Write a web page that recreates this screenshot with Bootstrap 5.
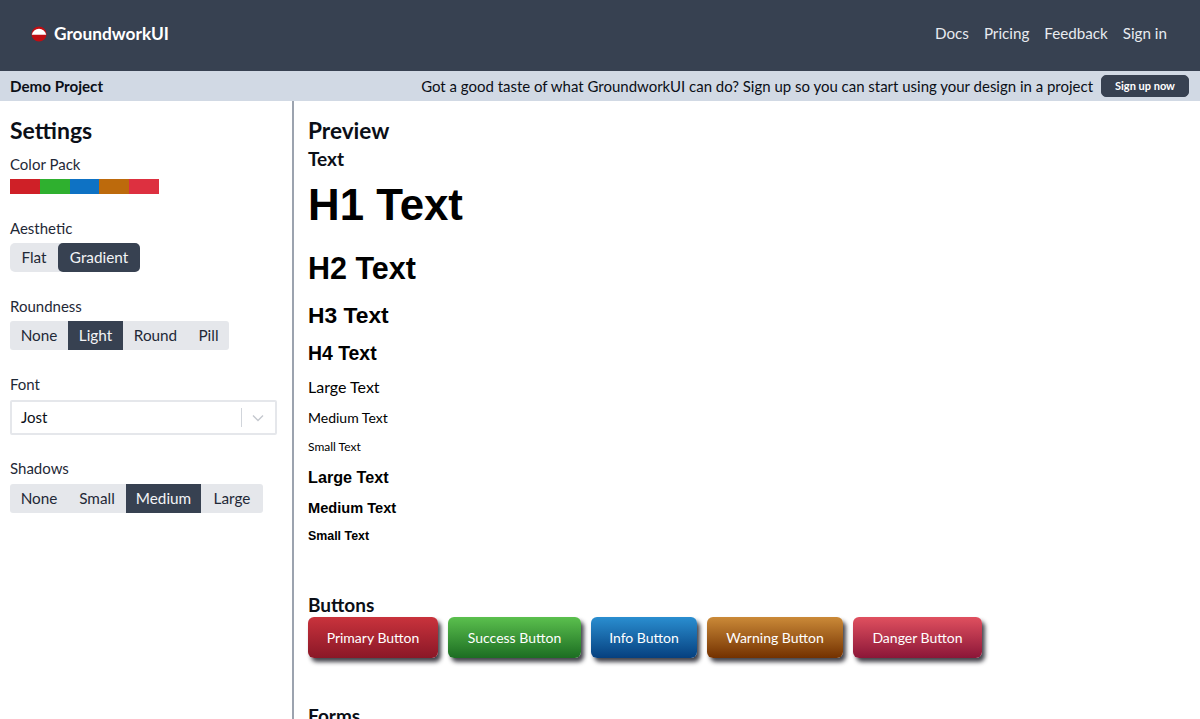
<!DOCTYPE html>
<html lang="en">
<head>
    <meta charset="UTF-8">
    <meta name="viewport" content="width=device-width, initial-scale=1.0">
    <title>GroundworkUI</title>
    <link href="https://cdn.jsdelivr.net/npm/bootstrap@5.3.0/dist/css/bootstrap.min.css" rel="stylesheet">
    <style>
        html, body { height: 100%; overflow: hidden; }
        body { font-family: "Lato", "Liberation Sans", sans-serif; color: #0b0f17; background: #fff; }

        .top-bar { height: 71px; background: #374151; padding: 0 33px 4px 31px; }
        .brand-link { font-size: 17.3px; font-weight: 700; color: #fff; text-decoration: none; gap: 7px; }
        .top-link { font-size: 15.2px; color: #e8ebf0; text-decoration: none; }
        .top-links { gap: 15px; }

        .demo-bar { height: 30px; background: #d1d9e4; padding: 0 11px 0 10px; }
        .demo-name { font-size: 15.2px; font-weight: 700; }
        .demo-cta { gap: 8px; font-size: 14.97px; }
        .signup-btn { height: 22px; width: 88px; padding: 0; font-size: 11px; font-weight: 700; color: #fff; background: #374151; border: 1px solid #374151; border-radius: 5px; line-height: 1; }

        .work-area { height: 618px; }
        .settings-col { width: 294px; flex: none; border-right: 2px solid #9ca3af; padding: 15px 10px 0; }
        .preview-col { flex: 1 1 auto; padding: 15px 15px 0 14px; overflow: hidden; }

        .settings-title { font-size: 23px; font-weight: 700; line-height: 29px; margin: 0 0 9px; }
        .setting-label { font-size: 15px; line-height: 20px; margin-bottom: 5px; color: #1f2937; }
        .setting-label.wide-gap { margin-bottom: 6px; }
        .setting-group { margin-bottom: 24px; }
        .setting-group.tight-group { margin-bottom: 23px; }

        .pack-swatches { width: 149px; height: 15px; }
        .pack-swatches span { flex: 1 1 0; }

        .choice-group { background: #e5e7eb; }
        .choice-btn { height: 29px; padding: 0; border: 0; background: transparent; font-size: 15.3px; line-height: 29px; color: #1f2937; text-align: center; }
        .choice-btn.on { background: #374151; color: #f3f4f6; }
        .rounded-set { border-radius: 5px; }
        .rounded-set .choice-btn.on { border-radius: 5px; }
        .light-set { border-radius: 3px; }
        .light-set .choice-btn.on { border-radius: 0; }
        .cw-41 { width: 41px; }
        .cw-48 { width: 48px; }
        .cw-55 { width: 55px; }
        .cw-58 { width: 58px; }
        .cw-62 { width: 62px; }
        .cw-65 { width: 65px; }
        .cw-75 { width: 75px; }
        .cw-82 { width: 82px; }

        .font-picker { width: 267px; height: 35px; border: 2px solid #e5e7eb; border-radius: 2px; padding: 0 11px 0 9px; font-size: 15px; }
        .font-divider { width: 1px; height: 19px; background: #d1d5db; margin-right: 10px; }

        .preview-title { font-size: 22.6px; font-weight: 700; line-height: 29px; margin: 0; }
        .preview-sub { font-size: 19px; font-weight: 700; line-height: 24px; margin: 2px 0 4px; }
        .type-stack > * { margin: 0; color: #000; }
        .type-stack .strong-face { font-family: "Liberation Sans", sans-serif; font-weight: 700; }
        .h1-sample { font-size: 43.8px; line-height: 60px; margin-bottom: 13px !important; }
        .h2-sample { font-size: 30.5px; line-height: 40px; margin-bottom: 12px !important; }
        .h3-sample { font-size: 22.8px; line-height: 30px; margin-bottom: 11px !important; }
        .h4-sample { font-size: 19.4px; line-height: 24px; margin-bottom: 10px !important; }
        .lg-sample { font-size: 16px; line-height: 24px; margin-bottom: 9px !important; }
        .md-sample { font-size: 14px; line-height: 20px; margin-bottom: 10px !important; }
        .sm-sample { font-size: 12px; line-height: 18px; margin-bottom: 9px !important; }
        .lg-strong { font-size: 16.2px; line-height: 24px; margin-bottom: 9px !important; }
        .md-strong { font-size: 14.6px; line-height: 20px; margin-bottom: 9px !important; }
        .sm-strong { font-size: 12.4px; line-height: 18px; }

        .buttons-head { margin: 48px 0 0; }
        .demo-btn-row { gap: 10px; }
        .demo-btn { height: 41px; padding: 0; border: 0; border-radius: 6px; color: #fff; font-size: 14px; box-shadow: 3px 4px 4px rgba(20, 20, 30, .8); text-align: center; }
        .grad-primary { width: 130px; background: linear-gradient(#c9333c, #8a1727); }
        .grad-success { width: 133px; background: linear-gradient(#5bc04e, #1c6d22); }
        .grad-info { width: 106px; background: linear-gradient(#2a8ed0, #06407f); }
        .grad-warning { width: 136px; background: linear-gradient(#cb8a38, #733100); }
        .grad-danger { width: 129px; background: linear-gradient(#e0505f, #8b1638); }
        .forms-head { margin: 46px 0 0; }
    </style>
</head>
<body>
    <nav class="top-bar d-flex align-items-center justify-content-between">
        <a class="brand-link d-flex align-items-center" href="#">
            <svg width="16" height="16" viewBox="0 0 16 16">
                <circle cx="8" cy="8" r="7.5" fill="#c00d12"/>
                <path d="M.8 8.8A7.3 7.3 0 0 1 15.2 8.8Z" fill="#fff"/>
            </svg>
            GroundworkUI
        </a>
        <div class="top-links d-flex align-items-center">
            <a class="top-link" href="#">Docs</a>
            <a class="top-link" href="#">Pricing</a>
            <a class="top-link" href="#">Feedback</a>
            <a class="top-link" href="#">Sign in</a>
        </div>
    </nav>

    <div class="demo-bar d-flex align-items-center justify-content-between">
        <div class="demo-name">Demo Project</div>
        <div class="demo-cta d-flex align-items-center">
            <span>Got a good taste of what GroundworkUI can do? Sign up so you can start using your design in a project</span>
            <button class="btn signup-btn" type="button">Sign up now</button>
        </div>
    </div>

    <div class="work-area d-flex">
        <aside class="settings-col">
            <h2 class="settings-title">Settings</h2>

            <div class="setting-group">
                <div class="setting-label">Color Pack</div>
                <div class="pack-swatches d-flex">
                    <span style="background:#cf2027"></span>
                    <span style="background:#2fb02f"></span>
                    <span style="background:#0e72c4"></span>
                    <span style="background:#bd6a0c"></span>
                    <span style="background:#dd3040"></span>
                </div>
            </div>

            <div class="setting-group">
                <div class="setting-label">Aesthetic</div>
                <div class="choice-group rounded-set d-inline-flex">
                    <button class="choice-btn cw-48" type="button">Flat</button>
                    <button class="choice-btn cw-82 on" type="button">Gradient</button>
                </div>
            </div>

            <div class="setting-group">
                <div class="setting-label">Roundness</div>
                <div class="choice-group light-set d-inline-flex">
                    <button class="choice-btn cw-58" type="button">None</button>
                    <button class="choice-btn cw-55 on" type="button">Light</button>
                    <button class="choice-btn cw-65" type="button">Round</button>
                    <button class="choice-btn cw-41" type="button">Pill</button>
                </div>
            </div>

            <div class="setting-group tight-group">
                <div class="setting-label wide-gap">Font</div>
                <div class="font-picker d-flex align-items-center">
                    <span class="flex-grow-1">Jost</span>
                    <span class="font-divider"></span>
                    <svg width="12" height="8" viewBox="0 0 12 8" fill="none" stroke="#c4c8ce" stroke-width="1.4">
                        <path d="M1 1.5 6 6.5 11 1.5"/>
                    </svg>
                </div>
            </div>

            <div class="setting-group">
                <div class="setting-label wide-gap">Shadows</div>
                <div class="choice-group light-set d-inline-flex">
                    <button class="choice-btn cw-58" type="button">None</button>
                    <button class="choice-btn cw-58" type="button">Small</button>
                    <button class="choice-btn cw-75 on" type="button">Medium</button>
                    <button class="choice-btn cw-62" type="button">Large</button>
                </div>
            </div>
        </aside>

        <main class="preview-col">
            <h2 class="preview-title">Preview</h2>
            <h3 class="preview-sub">Text</h3>
            <div class="type-stack">
                <h1 class="h1-sample strong-face">H1 Text</h1>
                <h2 class="h2-sample strong-face">H2 Text</h2>
                <h3 class="h3-sample strong-face">H3 Text</h3>
                <h4 class="h4-sample strong-face">H4 Text</h4>
                <div class="lg-sample">Large Text</div>
                <div class="md-sample">Medium Text</div>
                <div class="sm-sample">Small Text</div>
                <div class="lg-strong strong-face">Large Text</div>
                <div class="md-strong strong-face">Medium Text</div>
                <div class="sm-strong strong-face">Small Text</div>
            </div>

            <h3 class="preview-sub buttons-head">Buttons</h3>
            <div class="demo-btn-row d-flex">
                <button class="demo-btn grad-primary" type="button">Primary Button</button>
                <button class="demo-btn grad-success" type="button">Success Button</button>
                <button class="demo-btn grad-info" type="button">Info Button</button>
                <button class="demo-btn grad-warning" type="button">Warning Button</button>
                <button class="demo-btn grad-danger" type="button">Danger Button</button>
            </div>

            <h3 class="preview-sub forms-head">Forms</h3>
        </main>
    </div>

    <script src="https://cdn.jsdelivr.net/npm/bootstrap@5.3.0/dist/js/bootstrap.bundle.min.js"></script>
</body>
</html>
